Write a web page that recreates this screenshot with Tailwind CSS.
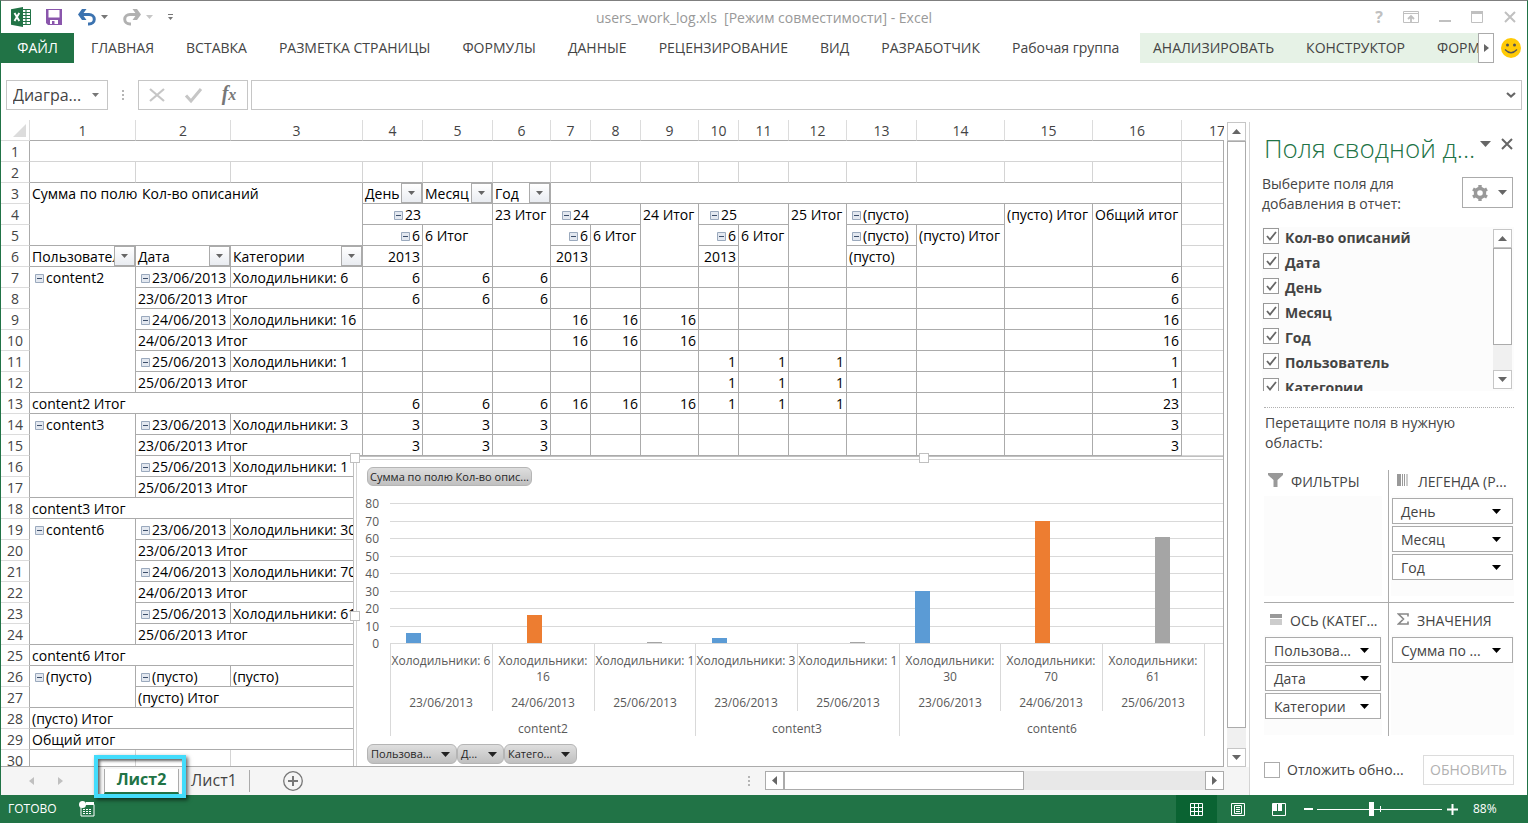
<!DOCTYPE html>
<html lang="ru">
<head>
<meta charset="utf-8">
<title>users_work_log.xls - Excel</title>
<script src="https://cdn.jsdelivr.net/npm/@tailwindcss/browser@4"></script>
</head>
<body class="bg-white">
<div class="h-screen flex flex-col overflow-hidden border-t border-t-[#7f7f7f] border-x border-x-[#217346] font-['Open_Sans','Noto_Sans',sans-serif] text-[#444444]">

  <!-- Title bar -->
  <header class="h-8 shrink-0 flex items-center relative">
    <div class="flex items-center pl-2.5">
      <svg class="w-5 h-5" viewBox="0 0 20 20" aria-label="Excel"><path d="M11 2.500h8.500v15h-8.500z" fill="#fff" stroke="#217346"/><path d="M11 5.500h8M11 8.500h8M11 11.500h8M11 14.500h8M15 3v14" stroke="#217346" stroke-width="1.200"/><path d="M0 2.300 12 0v20L0 17.700z" fill="#217346"/><path d="M3.500 6 8.300 14M8.300 6 3.500 14" stroke="#fff" stroke-width="1.900"/></svg>
      <button class="ml-3.5 w-[18px] h-[18px]" aria-label="Сохранить"><svg class="w-[18px] h-[18px]" viewBox="0 0 18 18"><path d="M1 1h16v16H3l-2-2z" fill="#8a56ac"/><path d="M3.500 2h11v7.500h-11zM5 12h8v4H5z" fill="#fff"/><path d="M7 13h2.500v3H7z" fill="#8a56ac"/></svg></button>
      <button class="ml-3.5 flex items-center" aria-label="Отменить"><svg class="w-5 h-[18px]" viewBox="0 0 20 18"><path d="M4 6.500h8a5 4.500 0 0 1 0 9.500H11" fill="none" stroke="#3c73b0" stroke-width="3"/><path d="M5 1h4.500L5.500 6.500 9.500 12H5L1 6.500z" fill="#3c73b0"/></svg><svg class="ml-1 w-[7px] h-1" viewBox="0 0 7 4"><path d="M0 0h7L3.500 4z" fill="#777"/></svg></button>
      <button class="ml-3.5 flex items-center" aria-label="Повторить"><svg class="w-5 h-[18px]" viewBox="0 0 20 18"><path d="M16 6.500H8a5 4.500 0 0 0 0 9.500H9" fill="none" stroke="#b1b1b1" stroke-width="3"/><path d="M15 1h-4.500L14.500 6.500 10.500 12H15L19 6.500z" fill="#b1b1b1"/></svg><svg class="ml-1 w-[7px] h-1" viewBox="0 0 7 4"><path d="M0 0h7L3.500 4z" fill="#c6c6c6"/></svg></button>
      <button class="ml-3.5" aria-label="Настройка панели"><svg class="w-[7px] h-[7px]" viewBox="0 0 7 7"><path d="M1 0h5v1H1zM1 3h5L3.500 6z" fill="#777"/></svg></button>
    </div>
    <h1 class="absolute inset-x-0 pt-0.5 text-center text-sm text-[#999] pointer-events-none whitespace-pre">users_work_log.xls  [Режим совместимости] - Excel</h1>
    <div class="ml-auto flex items-center gap-3.5 pr-2.5 text-[#c0c0c0]">
      <button class="w-5 text-base font-bold leading-5" aria-label="Справка">?</button>
      <button class="mr-0.5" aria-label="Параметры ленты"><svg class="w-4 h-3" viewBox="0 0 16 12" fill="none" stroke="currentColor"><path d="M.5.5h15v11H.5zM1 2.500h14"/><path d="M8 11V5M5 8l3-3 3 3" stroke-width="1.800"/></svg></button>
      <button class="ml-1" aria-label="Свернуть"><svg class="w-3 h-3" viewBox="0 0 12 12"><path d="M0 9h12v2H0z" fill="currentColor"/></svg></button>
      <button class="ml-1.5" aria-label="Развернуть"><svg class="w-3 h-3" viewBox="0 0 12 12"><path d="M.5.5h11v11H.5zM0 2h12" fill="none" stroke="currentColor"/><path d="M0 0h12v3H0z" fill="currentColor"/></svg></button>
      <button class="ml-1.5" aria-label="Закрыть"><svg class="w-3.5 h-3" viewBox="0 0 14 12"><path d="M2 1l10 10M12 1 2 11" stroke="currentColor" stroke-width="2"/></svg></button>
    </div>
  </header>

  <!-- Ribbon tabs -->
  <nav class="h-[30px] shrink-0 flex text-sm leading-[30px] whitespace-nowrap">
    <button class="w-[73px] bg-[#217346] text-white">ФАЙЛ</button>
    <div class="flex-1 flex gap-8 pl-[17px] min-w-0 overflow-hidden">
      <button>ГЛАВНАЯ</button><button>ВСТАВКА</button><button>РАЗМЕТКА СТРАНИЦЫ</button><button>ФОРМУЛЫ</button><button>ДАННЫЕ</button><button>РЕЦЕНЗИРОВАНИЕ</button><button>ВИД</button><button>РАЗРАБОТЧИК</button><button>Рабочая группа</button>
    </div>
    <div class="w-[338px] shrink-0 flex gap-8 pl-[13px] bg-[#e6f2e6] overflow-hidden">
      <button>АНАЛИЗИРОВАТЬ</button><button>КОНСТРУКТОР</button><button>ФОРМАТ</button>
    </div>
    <button class="w-4 shrink-0 border border-[#ababab] bg-white flex items-center justify-center" aria-label="Прокрутить ленту"><svg class="w-[5px] h-2" viewBox="0 0 5 8"><path d="M0 0l5 4-5 4z" fill="#666"/></svg></button>
    <button class="w-[33px] shrink-0 flex items-center justify-center" aria-label="Отзыв"><svg class="w-5 h-5" viewBox="0 0 20 20"><circle cx="10" cy="10" r="10" fill="#ffca05"/><circle cx="6.500" cy="7" r="1.500" fill="#555"/><circle cx="13.500" cy="7" r="1.500" fill="#555"/><path d="M4 11.500q6 6.500 12 0" fill="none" stroke="#555" stroke-width="1.300"/></svg></button>
  </nav>

  <!-- Formula bar -->
  <div class="mt-[17px] h-[30px] shrink-0 flex px-[5px]">
    <div class="w-[102px] flex items-center border border-[#c6c6c6]">
      <input class="w-20 pl-1.5 text-base outline-none" aria-label="Имя" value="Диагра...">
      <button class="ml-[5px]" aria-label="Список имён"><svg class="block w-[7px] h-1" viewBox="0 0 7 4"><path d="M0 0h7L3.500 4z" fill="#777"/></svg></button>
    </div>
    <svg class="w-[30px] h-full" viewBox="0 0 30 30"><path d="M14 10h2v2h-2zM14 14h2v2h-2zM14 18h2v2h-2z" fill="#b5b5b5"/></svg>
    <div class="w-[110px] flex items-center border border-[#c6c6c6]">
      <button class="w-9" aria-label="Отмена"><svg class="w-9 h-5" viewBox="0 0 36 20"><path d="M11 4l14 12M25 4 11 16" stroke="#c6c6c6" stroke-width="2.200"/></svg></button>
      <button class="w-9" aria-label="Ввод"><svg class="w-9 h-5" viewBox="0 0 36 20"><path d="M11 10.500l5 5.500L26 4" fill="none" stroke="#c6c6c6" stroke-width="3"/></svg></button>
      <button class="w-9 font-['Liberation_Serif',serif] italic font-bold text-xl leading-5 text-[#777]" aria-label="Вставить функцию">f<span class="text-base">x</span></button>
    </div>
    <div class="ml-[3px] flex-1 flex items-center border border-[#c6c6c6]">
      <input class="flex-1 px-2 text-sm outline-none" aria-label="Строка формул">
      <button class="mr-[5px]" aria-label="Развернуть строку формул"><svg class="w-2.5 h-1.5" viewBox="0 0 10 6"><path d="M1 1l4 3.500L9 1" fill="none" stroke="#666" stroke-width="2.200"/></svg></button>
    </div>
  </div>

  <main class="mt-2.5 flex-1 min-h-0 flex">
    <div class="flex-1 min-w-0 flex flex-col">
      <div class="flex-1 min-h-0 flex">
        <!-- Worksheet -->
        <section class="relative flex-1 min-w-0 overflow-hidden border-b border-[#ababab]">
          <table class="table-fixed w-full border-separate border-spacing-0 text-sm leading-[18px] text-black">
            <colgroup><col class="w-[29px]"><col class="w-[106px]"><col class="w-[95px]"><col class="w-[132px]"><col class="w-[60px]"><col class="w-[70px]"><col class="w-[58px]"><col class="w-[40px]"><col class="w-[50px]"><col class="w-[58px]"><col class="w-[40px]"><col class="w-[50px]"><col class="w-[58px]"><col class="w-[70px]"><col class="w-[88px]"><col class="w-[88px]"><col class="w-[89px]"><col></colgroup>
            <thead id="head"></thead>
            <tbody id="grid"></tbody>
          </table>

          <!-- Pivot chart floating over the sheet -->
          <div class="absolute left-[352px] top-[336px] w-[1140px] h-[330px] border border-[#c0c0c0] bg-white p-0.5">
            <div class="relative w-full h-full border border-[#d4d4d4]">
              <svg class="block w-[1130px] h-[310px] font-['Open_Sans','Noto_Sans',sans-serif] text-xs" viewBox="0 0 1130 310" id="chart" role="img" aria-label="Сводная диаграмма"></svg>
              <button class="absolute left-2.5 top-[7px] w-[165px] h-[19px] rounded-md border border-[#b5b5b5] bg-linear-to-b from-[#dedede] to-[#c0c0c0] text-[11px] leading-4 text-[#262626] whitespace-nowrap">Сумма по полю Кол-во опис...</button>
              <div class="absolute left-2.5 top-[284px] flex text-[11px] leading-4 text-[#262626]">
                <button class="w-[90px] h-5 pl-[3px] pr-1.5 flex items-center justify-between rounded-md border border-[#b5b5b5] bg-linear-to-b from-[#dedede] to-[#c0c0c0]">Пользова...<svg class="w-[9px] h-[5px]" viewBox="0 0 9 5"><path d="M0 0h9L4.500 5z" fill="#222"/></svg></button>
                <button class="w-[47px] h-5 pl-[3px] pr-1.5 flex items-center justify-between rounded-md border border-[#b5b5b5] bg-linear-to-b from-[#dedede] to-[#c0c0c0]">Д...<svg class="w-[9px] h-[5px]" viewBox="0 0 9 5"><path d="M0 0h9L4.500 5z" fill="#222"/></svg></button>
                <button class="w-[73px] h-5 pl-[3px] pr-1.5 flex items-center justify-between rounded-md border border-[#b5b5b5] bg-linear-to-b from-[#dedede] to-[#c0c0c0]">Катего...<svg class="w-[9px] h-[5px]" viewBox="0 0 9 5"><path d="M0 0h9L4.500 5z" fill="#222"/></svg></button>
              </div>
            </div>
            <i class="absolute -left-1 -top-1 w-2.5 h-2.5 bg-white border border-[#c0c0c0]"></i>
            <i class="absolute -left-1 top-[154px] w-2.5 h-2.5 bg-white border border-[#c0c0c0]"></i>
            <i class="absolute left-[565px] -top-1 w-2.5 h-2.5 bg-white border border-[#c0c0c0]"></i>
          </div>
          <i class="absolute right-0 top-5 bottom-0 w-px bg-[#ababab]"></i>
        </section>
        <!-- Vertical scrollbar -->
        <div class="ml-[3px] mr-[3px] mt-0.5 w-[19px] flex flex-col">
          <button class="h-[19px] border border-[#c6c6c6] flex items-center justify-center" aria-label="Вверх"><svg class="w-[9px] h-[5px]" viewBox="0 0 9 5"><path d="M0 5h9L4.500 0z" fill="#666"/></svg></button>
          <div class="flex-1 bg-[#f0f0f0] pb-5"><div class="h-full bg-white border border-[#ababab]"></div></div>
          <button class="h-[19px] border border-[#c6c6c6] flex items-center justify-center" aria-label="Вниз"><svg class="w-[9px] h-[5px]" viewBox="0 0 9 5"><path d="M0 0h9L4.500 5z" fill="#666"/></svg></button>
        </div>
      </div>

      <!-- Sheet tabs and horizontal scrollbar -->
      <div class="h-7 shrink-0 flex bg-[#f5f5f5]">
        <div class="flex items-center gap-6 w-[103px] pl-7">
          <button aria-label="Предыдущий лист"><svg class="w-[5px] h-2" viewBox="0 0 5 8"><path d="M5 0v8L0 4z" fill="#c0c0c0"/></svg></button>
          <button aria-label="Следующий лист"><svg class="w-[5px] h-2" viewBox="0 0 5 8"><path d="M0 0v8l5-4z" fill="#c0c0c0"/></svg></button>
        </div>
        <div class="relative w-[75px]">
          <button class="w-full h-[25px] pb-1 bg-white border-x border-x-[#ababab] border-b-2 border-b-[#217346] text-base leading-5 font-bold text-[#217346]">Лист2</button>
          <i class="absolute z-10 -left-2.5 -top-3 w-[92px] h-[43px] border-4 border-[#43dcfb] shadow-[2px_2px_4px_rgba(0,0,0,0.6),inset_2px_2px_3px_rgba(0,0,0,0.6)] pointer-events-none"></i>
        </div>
        <button class="w-[71px] pb-1.5 text-base leading-5 border-r border-[#ababab] h-[22px] self-center">Лист1</button>
        <button class="ml-[33px]" aria-label="Новый лист"><svg class="w-5 h-5" viewBox="0 0 20 20" fill="none" stroke="#777"><circle cx="10" cy="10" r="9.300" stroke-width="1.300"/><path d="M10 5v10M5 10h10" stroke-width="2"/></svg></button>
        <svg class="ml-auto w-2 h-full" viewBox="0 0 8 28"><path d="M3 9h2v2H3zM3 13h2v2H3zM3 17h2v2H3z" fill="#b5b5b5"/></svg>
        <div class="ml-3 mr-[25px] mt-1 w-[459px] h-[19px] flex bg-[#e8e8e8]">
          <button class="w-[19px] bg-white border border-[#ababab] flex items-center justify-center" aria-label="Влево"><svg class="w-[5px] h-[9px]" viewBox="0 0 5 9"><path d="M5 0v9L0 4.500z" fill="#666"/></svg></button>
          <div class="w-60 bg-white border border-[#ababab]"></div>
          <button class="ml-auto w-[19px] bg-white border border-[#ababab] flex items-center justify-center" aria-label="Вправо"><svg class="w-[5px] h-[9px]" viewBox="0 0 5 9"><path d="M0 0v9l5-4.500z" fill="#666"/></svg></button>
        </div>
      </div>
    </div>

    <!-- Pivot fields pane -->
    <aside class="w-[278px] shrink-0 border-l border-[#d4d4d4] pl-3.5 pr-[13px] flex flex-col text-sm leading-5 mt-0.5">
      <div class="flex items-start h-[52px] pr-px">
        <h2 class="pt-2 text-[26px] leading-9 font-light text-[#217346] whitespace-nowrap">Поля сводной д...</h2>
        <button class="ml-auto mt-[19px]" aria-label="Параметры области"><svg class="block w-[11px] h-1.5" viewBox="0 0 11 6"><path d="M0 0h11L5.500 6z" fill="#666"/></svg></button>
        <button class="ml-2.5 mt-4" aria-label="Закрыть область"><svg class="block w-3 h-3" viewBox="0 0 12 12"><path d="M1 1l10 10M11 1 1 11" stroke="#666" stroke-width="2"/></svg></button>
      </div>
      <div class="flex justify-between h-[53px] pr-px">
        <p class="-ml-0.5">Выберите поля для<br>добавления в отчет:</p>
        <button class="mt-[3px] w-[51px] h-[31px] border border-[#ababab] flex items-center justify-center gap-2.5" aria-label="Сервис"><svg class="w-4 h-4 ml-1" viewBox="0 0 16 16"><circle cx="8" cy="8" r="4.500" fill="none" stroke="#999" stroke-width="3.400"/><path d="M8 0v3M8 13v3M1 4l2.600 1.500M12.400 10.500 15 12M1 12l2.600-1.500M12.400 5.500 15 4" stroke="#999" stroke-width="3.400"/></svg><svg class="w-[9px] h-[5px]" viewBox="0 0 9 5"><path d="M0 0h9L4.500 5z" fill="#666"/></svg></button>
      </div>
      <div class="-ml-0.5 h-[164px] flex justify-between bg-[#fcfcfc] overflow-hidden">
        <ul class="flex flex-col font-bold" id="fields"></ul>
        <div class="mt-0.5 mb-0.5 mr-0.5 w-[19px] flex flex-col bg-[#f0f0f0]">
          <button class="h-[19px] bg-white border border-[#c6c6c6] flex items-center justify-center" aria-label="Вверх"><svg class="w-[9px] h-[5px]" viewBox="0 0 9 5"><path d="M0 5h9L4.500 0z" fill="#666"/></svg></button>
          <div class="h-[97px] bg-white border border-[#ababab]"></div>
          <button class="mt-auto h-[19px] bg-white border border-[#c6c6c6] flex items-center justify-center" aria-label="Вниз"><svg class="w-[9px] h-[5px]" viewBox="0 0 9 5"><path d="M0 0h9L4.500 5z" fill="#666"/></svg></button>
        </div>
      </div>
      <hr class="mt-4 border-t border-dotted border-[#b0b0b0]">
      <p class="mt-[5px] pl-px h-[57px]">Перетащите поля в нужную<br>область:</p>
      <div class="grid grid-cols-[1fr_1fr] whitespace-nowrap">
        <section class="h-[133px] border-r border-b border-[#ababab] pr-1.5">
          <h3 class="h-[26px] pl-1 flex gap-2 leading-6"><svg class="w-[15px] h-[15px] mt-0.5 shrink-0" viewBox="0 0 15 15"><path d="M0 1h15v2L9.500 8v7h-4V8L0 3z" fill="#999"/></svg>ФИЛЬТРЫ</h3>
          <div class="h-[100px] bg-[#fcfcfc]"></div>
        </section>
        <section class="h-[133px] border-b border-[#ababab] pl-0.5">
          <h3 class="h-[26px] pl-1.5 flex gap-2.5 leading-6"><svg class="w-[11px] h-3 mt-1 shrink-0" viewBox="0 0 11 12"><path d="M0 0h4v12H0zM5 0h1v12H5zM7 0h1v12H7zM9.500 0h1v12h-1z" fill="#999"/></svg><span>ЛЕГЕНДА (Р...</span></h3>
          <div class="h-[100px] pt-0.5 bg-[#fcfcfc] flex flex-col gap-0.5" data-items="День|Месяц|Год"></div>
        </section>
        <section class="h-[133px] border-r border-[#ababab] pr-1.5">
          <h3 class="h-8 pl-1.5 pt-1.5 flex gap-2 leading-6"><svg class="w-3 h-[11px] mt-[5px] shrink-0" viewBox="0 0 12 11"><path d="M0 0h12v4H0zM0 5.500h12v1H0zM0 7.500h12v1H0zM0 9.500h12v1H0z" fill="#999"/></svg><span>ОСЬ (КАТЕГ...</span></h3>
          <div class="h-[100px] pt-0.5 bg-[#fcfcfc] flex flex-col gap-0.5" data-items="Пользова...|Дата|Категории"></div>
        </section>
        <section class="h-[133px] pl-0.5">
          <h3 class="h-8 pl-1.5 pt-1.5 flex gap-2 leading-6"><svg class="w-3 h-3 mt-1 shrink-0" viewBox="0 0 12 12"><path d="M11 3.500V1H1.500L6.500 6 1.500 11H11V8.500" fill="none" stroke="#888" stroke-width="1.600"/></svg>ЗНАЧЕНИЯ</h3>
          <div class="h-[100px] pt-0.5 bg-[#fcfcfc] flex flex-col gap-0.5" data-items="Сумма по ..."></div>
        </section>
      </div>
      <div class="mt-[19px] flex items-center justify-between">
        <label class="flex items-center gap-[7px]"><input type="checkbox" class="appearance-none w-4 h-4 border border-[#ababab]">Отложить обно...</label>
        <button class="w-[91px] h-[30px] border border-[#dcdcdc] text-[#b1b1b1]" disabled>ОБНОВИТЬ</button>
      </div>
    </aside>
  </main>

  <!-- Status bar -->
  <footer class="h-7 shrink-0 flex items-center bg-[#217346] text-white text-xs pl-[7px]">
    <span>ГОТОВО</span>
    <button class="ml-[22px]" aria-label="Запись макроса"><svg class="w-4 h-4" viewBox="0 0 16 16"><path d="M2 3.500h13V15H2z" fill="none" stroke="#fff"/><path d="M7 1h8v3H7z" fill="#fff"/><circle cx="3.500" cy="3.500" r="3.500" fill="#fff"/><path d="M4 8.500h9M4 10.500h9M4 12.500h9" stroke="#fff" stroke-dasharray="2 1"/></svg></button>
    <button class="ml-auto w-[41px] h-full bg-[#0a6332] flex items-center justify-center" aria-label="Обычный"><svg class="w-[13px] h-[13px]" viewBox="0 0 13 13"><path d="M.5.5h12v12H.5zM4.500 0v13M8.500 0v13M0 4.500h13M0 8.500h13" fill="none" stroke="#fff"/></svg></button>
    <button class="w-[41px] flex justify-center" aria-label="Разметка страницы"><svg class="w-3.5 h-[13px]" viewBox="0 0 14 13"><path d="M.5.5h13v12H.5zM3.500 2.500h7v8h-7zM5 4.500h4M5 6.500h4M5 8.500h4" fill="none" stroke="#fff"/></svg></button>
    <button class="w-[41px] flex justify-center" aria-label="Страничный"><svg class="w-3.5 h-[13px]" viewBox="0 0 14 13"><path d="M.5.5h13v12H.5z" fill="none" stroke="#fff"/><path d="M1 1h4v7H1zM6 1h4v7H6z" fill="#fff"/></svg></button>
    <button class="w-[18px] flex justify-center" aria-label="Уменьшить"><svg class="w-[9px] h-0.5" viewBox="0 0 9 2"><path d="M0 0h9v2H0z" fill="#fff"/></svg></button>
    <div class="relative w-[125px] h-5 flex items-center">
      <input type="range" aria-label="Масштаб" min="0" max="100" value="43" class="appearance-none w-full h-px bg-white [&::-webkit-slider-thumb]:appearance-none [&::-webkit-slider-thumb]:w-[5px] [&::-webkit-slider-thumb]:h-3.5 [&::-webkit-slider-thumb]:bg-white">
      <i class="absolute left-1/2 top-[7px] w-px h-1.5 bg-white"></i>
    </div>
    <button class="ml-1 w-3 flex justify-center" aria-label="Увеличить"><svg class="w-[11px] h-[11px]" viewBox="0 0 11 11"><path d="M5.500 0v11M0 5.500h11" stroke="#fff" stroke-width="2"/></svg></button>
    <span class="ml-[15px] w-[54px]">88%</span>
  </footer>
</div>

<script>
const arrow = '<svg class="w-[7px] h-1" viewBox="0 0 7 4"><path d="M0 0h7L3.500 4z" fill="#666"/></svg>';
const minus = '<svg class="w-[9px] h-[9px] shrink-0" viewBox="0 0 9 9"><path d="M.5.5h8v8h-8z" fill="#e3e8f0" stroke="#9aa9bd"/><path d="M2 4.500h5" stroke="#3d4f6b"/></svg>';

/* Column headings */
let head = '<tr><th class="h-[21px] p-0 border-r border-r-[#dcdcdc] border-b border-b-[#dcdcdc]"><svg class="ml-3 w-[13px] h-[13px]" viewBox="0 0 13 13"><path d="M13 0v13H0z" fill="#dcdcdc"/></svg></th>';
for (let c = 1; c <= 17; c++) head += c < 17
  ? '<th class="h-[21px] p-0 pt-0.5 font-normal text-[#444] border-r border-r-[#dcdcdc] border-b border-b-[#ababab]">' + c + '</th>'
  : '<th class="h-[21px] p-0 pt-0.5 pl-[27px] font-normal text-left text-[#444] border-b border-b-[#ababab] whitespace-nowrap overflow-hidden">17</th>';
document.getElementById('head').innerHTML = head + '</tr>';

/* t text; f flags: r right, m collapse button, v filter, x no right line, y no bottom line, g light lines, e light right line; c colspan, s rowspan */
function cell(t, f = '', c = 1, s = 1) {
  const b = [
    f.includes('x') ? '' : f.includes('g') || f.includes('e') ? 'border-r border-r-[#d4d4d4]' : 'border-r border-r-[#ababab]',
    f.includes('y') ? '' : f.includes('g') ? 'border-b border-b-[#d4d4d4]' : 'border-b border-b-[#ababab]'
  ].join(' ');
  let inner = t;
  if (f.includes('v')) inner = '<div class="flex h-5"><span class="flex-1 overflow-hidden pl-0.5 pt-0.5">' + t + '</span><button class="w-[21px] h-5 shrink-0 border border-[#ababab] bg-linear-to-b from-white to-[#e9ecf1] flex items-center justify-center" aria-label="Фильтр">' + arrow + '</button></div>';
  else if (f.includes('m')) inner = '<div class="flex items-center gap-0.5 pt-0.5 ' + (f.includes('r') ? 'justify-end pr-0.5' : 'pl-[5px]') + '">' + minus + '<span>' + t + '</span></div>';
  else if (t) inner = '<div class="pt-0.5 ' + (f.includes('r') ? 'text-right pr-0.5' : 'pl-0.5') + '">' + t + '</div>';
  return '<td colspan="' + c + '" rowspan="' + s + '" class="h-[21px] p-0 align-top whitespace-nowrap overflow-hidden ' + b + '">' + inner + '</td>';
}
const rep = (n, f) => Array.from({ length: n }, () => cell('', f)).join('');
const nums = list => list.map(v => cell(v === 0 ? '' : String(v), 'r')).join('');
const A = n => [n, n, n, 0, 0, 0, 0, 0, 0, 0, 0, 0, n], B = n => [0, 0, 0, n, n, n, 0, 0, 0, 0, 0, 0, n], C = n => [0, 0, 0, 0, 0, 0, n, n, n, 0, 0, 0, n], Z = Array(13).fill(0);
const day = (d, k, n) => cell(d, 'm') + cell('Холодильники: ' + k) + nums(n);
const tot = (d, n) => cell(d + ' Итог', '', 2) + nums(n);
const all = (t, n) => cell(t, '', 3) + nums(n);
const rows = [
  cell('', 'g', 16),
  rep(16, 'e'),
  '<td colspan="3" rowspan="3" class="p-0 align-top border-r border-b border-[#ababab] whitespace-nowrap"><div class="flex pl-0.5 pt-0.5"><span class="w-[106px] overflow-hidden">Сумма по полю</span><span class="pl-1">Кол-во описаний</span></div></td>' + cell('День', 'v') + cell('Месяц', 'v') + cell('Год', 'v') + cell('', '', 10),
  cell('23', 'mrx') + cell('') + cell('23 Итог', 'y') + cell('24', 'mrx') + cell('') + cell('24 Итог', 'y') + cell('25', 'mrx') + cell('') + cell('25 Итог', 'y') + cell('(пусто)', 'mx') + cell('') + cell('(пусто) Итог', 'y') + cell('Общий итог', 'y'),
  (cell('6', 'mr') + cell('6 Итог', 'y') + cell('', 'y')).repeat(3) + cell('(пусто)', 'm') + cell('(пусто) Итог', 'y') + rep(2, 'y'),
  cell('Пользователь', 'v') + cell('Дата', 'v') + cell('Категории', 'v') + (cell('2013', 'r') + rep(2, '')).repeat(3) + cell('(пусто)') + rep(3, ''),
  cell('content2', 'm', 1, 6) + day('23/06/2013', 6, A(6)),
  tot('23/06/2013', A(6)),
  day('24/06/2013', 16, B(16)), tot('24/06/2013', B(16)),
  day('25/06/2013', 1, C(1)), tot('25/06/2013', C(1)),
  all('content2 Итог', [6, 6, 6, 16, 16, 16, 1, 1, 1, 0, 0, 0, 23]),
  cell('content3', 'm', 1, 4) + day('23/06/2013', 3, A(3)),
  tot('23/06/2013', A(3)),
  day('25/06/2013', 1, Z), tot('25/06/2013', Z),
  all('content3 Итог', Z),
  cell('content6', 'm', 1, 6) + day('23/06/2013', 30, Z), tot('23/06/2013', Z),
  day('24/06/2013', 70, Z), tot('24/06/2013', Z),
  day('25/06/2013', 61, Z), tot('25/06/2013', Z),
  all('content6 Итог', Z),
  cell('(пусто)', 'm', 1, 2) + cell('(пусто)', 'm') + cell('(пусто)') + nums(Z),
  tot('(пусто)', Z), all('(пусто) Итог', Z), all('Общий итог', Z),
  rep(16, 'g')
];
document.getElementById('grid').innerHTML = rows.map((r, i) =>
  '<tr><th class="h-[21px] p-0 pt-0.5 font-normal text-[#444] border-r border-r-[#ababab] border-b border-b-[#dcdcdc]">' + (i + 1) + '</th>' + r + cell('', 'xg') + '</tr>').join('');

/* Chart */
const base = 183, x0 = 33;
let s = '';
for (let v = 0; v <= 80; v += 10) {
  const y = Math.round(base - v * 1.75);
  s += '<path d="M' + x0 + ' ' + (y + .5) + 'H1130" stroke="#d9d9d9"/><text x="22" y="' + (y + 5) + '" text-anchor="end" fill="#595959">' + v + '</text>';
}
const xs = [33, 135, 237, 338, 440, 542, 643, 745, 847];
[[49, 6, '#5b9bd5'], [170, 16, '#ed7d31'], [290, 1, '#a5a5a5'], [355, 3, '#5b9bd5'], [493, 1, '#a5a5a5'], [558, 30, '#5b9bd5'], [678, 70, '#ed7d31'], [798, 61, '#a5a5a5']].forEach(([x, v, c]) => {
  const h = Math.max(1, Math.floor(v * 1.75));
  s += '<rect x="' + x + '" y="' + (base - h) + '" width="15" height="' + h + '" fill="' + c + '"/>';
});
xs.forEach((x, i) => { s += '<path d="M' + (x + .5) + ' 183V' + ([0, 3, 5, 8].includes(i) ? 276 : 251) + '" stroke="#d9d9d9"/>'; });
const label = (x, y, t) => '<text x="' + x + '" y="' + y + '" text-anchor="middle" fill="#595959">' + t + '</text>';
['6', '|16', '1', '3', '1', '|30', '|70', '|61'].forEach((k, i) => {
  const m = Math.ceil((xs[i] + xs[i + 1]) / 2);
  s += k[0] === '|' ? label(m, 205, 'Холодильники:') + label(m, 221, k.slice(1)) : label(m, 205, 'Холодильники: ' + k);
  s += label(m, 247, ['23', '24', '25', '23', '25', '23', '24', '25'][i] + '/06/2013');
});
s += label(186, 273, 'content2') + label(440, 273, 'content3') + label(695, 273, 'content6');
document.getElementById('chart').innerHTML = s;

/* Field list and areas */
document.getElementById('fields').innerHTML = ['Кол-во описаний', 'Дата', 'День', 'Месяц', 'Год', 'Пользователь', 'Категории'].map(t =>
  '<li class="h-[25px] shrink-0 pl-px"><label class="flex items-start gap-1.5"><span class="grid mt-px"><input type="checkbox" checked class="peer appearance-none col-start-1 row-start-1 w-4 h-4 border border-[#999] bg-white"><svg class="invisible peer-checked:visible col-start-1 row-start-1 w-4 h-4 pointer-events-none" viewBox="0 0 16 16"><path d="M4 8l3 3.500L13 4" fill="none" stroke="#666" stroke-width="1.800"/></svg></span><span class="pt-px">' + t + '</span></label></li>').join('');
document.querySelectorAll('[data-items]').forEach(el => {
  el.innerHTML = el.dataset.items.split('|').map(t =>
    '<button class="mx-px h-[26px] shrink-0 pl-2 pr-[11px] flex items-center justify-between border border-[#ababab] bg-white"><span class="pt-0.5">' + t + '</span><svg class="w-[9px] h-[5px]" viewBox="0 0 9 5"><path d="M0 0h9L4.500 5z" fill="#000"/></svg></button>').join('');
});
</script>
</body>
</html>
